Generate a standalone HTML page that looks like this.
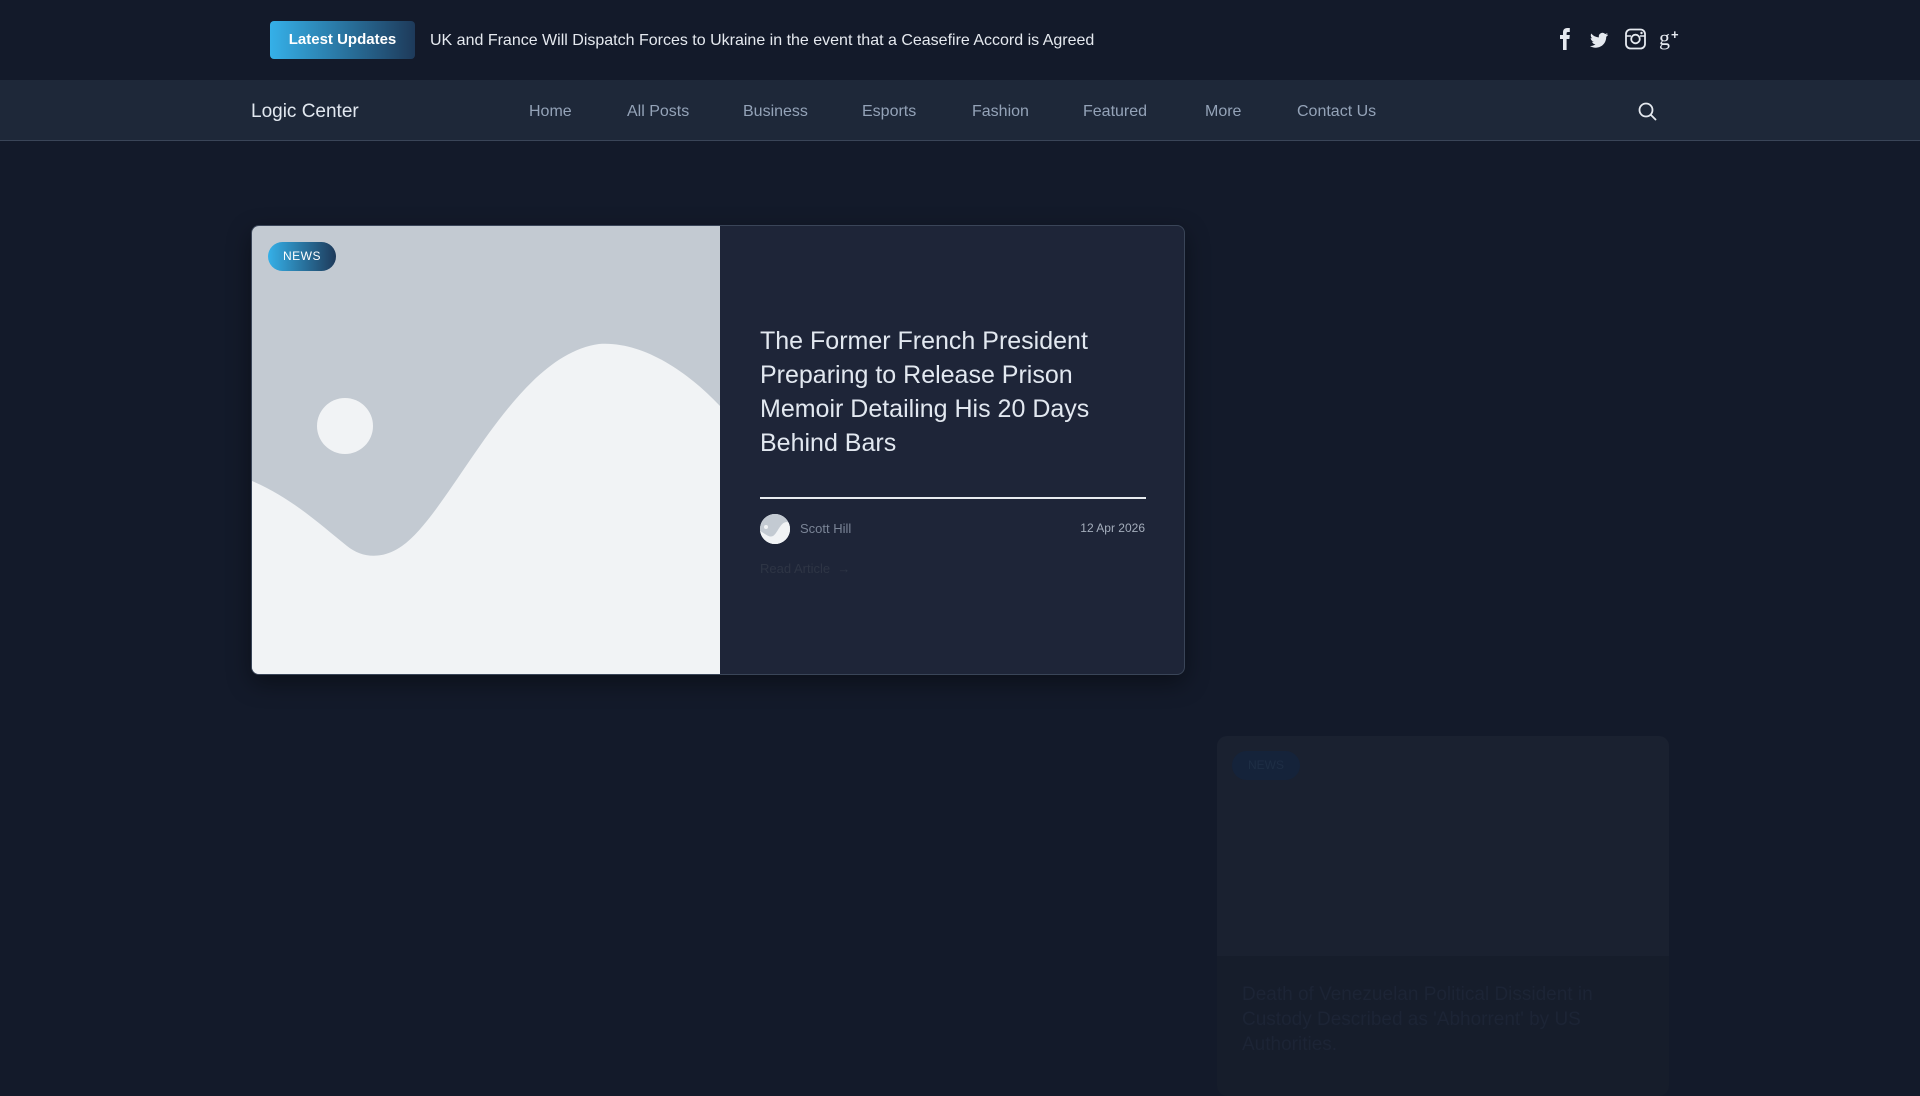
<!DOCTYPE html>
<html><head><meta charset="utf-8"><style>
*{margin:0;padding:0;box-sizing:border-box}
body{width:1920px;height:1080px;overflow:hidden;background:#131a2a;font-family:"Liberation Sans",sans-serif;position:relative}
.top{position:absolute;left:0;top:0;width:1920px;height:80px;background:#131a2a}
.btn{position:absolute;left:270px;top:21px;width:145px;height:38px;border-radius:4px;background:linear-gradient(90deg,#35b0e8,#1e3a5a);color:#fff;font-weight:bold;font-size:15px;line-height:38px;text-align:center}
.tick{position:absolute;left:430px;top:32px;color:#e5e9ef;font-size:16px}
.nav{position:absolute;left:0;top:80px;width:1920px;height:61px;background:#1e2839;border-bottom:1px solid #3a4558}
.logo{position:absolute;left:251px;top:21px;color:#e2e8f0;font-size:19px}
.nav a{position:absolute;top:23px;color:#94a3b8;font-size:16px;text-decoration:none}
.card{position:absolute;left:251px;top:225px;width:934px;height:450px;border-radius:8px;background:#1e2538;border:1px solid #3a4558;overflow:hidden;box-shadow:0 8px 24px rgba(0,0,0,.4)}
.img{position:absolute;left:0;top:0;width:468px;height:450px}
.badge{position:absolute;left:16px;top:16px;width:68px;height:29px;border-radius:15px;background:linear-gradient(90deg,#35b0e8,#1e3a5a);color:#fff;font-size:12px;line-height:29px;text-align:center;letter-spacing:.5px}
.title{position:absolute;left:508px;top:98px;width:390px;color:#e2e8f0;font-size:25px;line-height:34px}
.hr{position:absolute;left:508px;top:271px;width:386px;height:2px;background:#e8ecf0}
.av{position:absolute;left:508px;top:288px;width:30px;height:30px;border-radius:50%;background:#f1f3f5;overflow:hidden}
.auth{position:absolute;left:548px;top:295px;color:#7a8496;font-size:13px}
.date{position:absolute;right:39px;top:295px;color:#a4adbb;font-size:12px}
.read{position:absolute;left:508px;top:335px;color:#2e3545;font-size:13px}
.c2{position:absolute;left:1217px;top:736px;width:452px;height:360px;border-radius:10px;background:#161d2b;overflow:hidden}
.c2 .im{position:absolute;left:0;top:0;width:452px;height:220px;background:#1a2130}
.c2 .t{position:absolute;left:25px;top:246px;width:400px;color:#1c2435;font-size:19px;line-height:25px}
</style></head><body>
<div class="top">
<div class="btn">Latest Updates</div>
<div class="tick">UK and France Will Dispatch Forces to Ukraine in the event that a Ceasefire Accord is Agreed</div>
<svg style="position:absolute;left:1554px;top:26px" width="135" height="26" viewBox="0 0 135 26">
<path d="M9 24V13H6V9h3V6.5C9 3.8 10.3 2 13.3 2h2.5v4H14c-1.2 0-1.4.5-1.4 1.5V9h3.2l-.4 4h-2.8v11z" fill="#e5e9ef"/>
<path d="M54 8.5c-.7.3-1.4.5-2.1.6.8-.5 1.3-1.2 1.6-2-.7.4-1.5.7-2.3.9a3.7 3.7 0 0 0-6.3 3.4c-3.1-.2-5.8-1.600-7.600-3.900-1 1.700-.5 3.800 1.100 4.900-.6 0-1.200-.2-1.700-.5 0 1.800 1.300 3.300 3 3.700-.5.2-1.100.2-1.700.1.5 1.500 1.900 2.500 3.500 2.600A7.5 7.5 0 0 1 36 20c1.700 1.100 3.600 1.700 5.700 1.700 6.900 0 10.700-5.700 10.500-10.900.7-.5 1.300-1.100 1.800-1.800z" fill="#e5e9ef"/>
<rect x="72" y="3.5" width="19" height="19" rx="4.5" fill="none" stroke="#e5e9ef" stroke-width="1.8"/><circle cx="81.5" cy="13" r="4.3" fill="none" stroke="#e5e9ef" stroke-width="1.8"/><line x1="72" y1="10" x2="77" y2="10" stroke="#e5e9ef" stroke-width="1.5"/><line x1="86" y1="10" x2="91" y2="10" stroke="#e5e9ef" stroke-width="1.5"/><circle cx="87.5" cy="7" r="1.2" fill="#e5e9ef"/>
<text x="105" y="19" font-family="Liberation Serif" font-size="22" fill="#e5e9ef">g</text><text x="117" y="13" font-family="Liberation Sans" font-size="13" font-weight="bold" fill="#e5e9ef">+</text>
</svg>
</div>
<div class="nav">
<div class="logo">Logic Center</div>
<a style="left:529px">Home</a><a style="left:627px">All Posts</a><a style="left:743px">Business</a><a style="left:862px">Esports</a><a style="left:972px">Fashion</a><a style="left:1083px">Featured</a><a style="left:1205px">More</a><a style="left:1297px">Contact Us</a>
<svg style="position:absolute;left:1637px;top:21px" width="22" height="22" viewBox="0 0 22 22"><circle cx="9" cy="9" r="6.5" fill="none" stroke="#e5e9ef" stroke-width="1.8"/><line x1="14" y1="14" x2="18.5" y2="18.5" stroke="#e5e9ef" stroke-width="1.8" stroke-linecap="round"/></svg>
</div>
<div class="card">
<svg class="img" viewBox="0 0 468 450"><rect width="468" height="450" fill="#c3cad2"/><circle cx="93" cy="200" r="28" fill="#f1f3f5"/><path d="M0 255C40 272 70 300 95 320C110 332 130 334 150 320C200 285 260 130 347 118C390 115 435 145 468 180V450H0Z" fill="#f1f3f5"/></svg>
<div class="badge">NEWS</div>
<div class="title">The Former French President Preparing to Release Prison Memoir Detailing His 20 Days Behind Bars</div>
<div class="hr"></div>
<div class="av"><svg width="30" height="30" viewBox="0 0 30 30"><rect width="30" height="30" fill="#c3cad2"/><path d="M0 17C6 20 9 24 13 22C18 19 20 8 27 8L30 9V30H0Z" fill="#f1f3f5"/><circle cx="6" cy="13" r="2" fill="#f1f3f5"/></svg></div>
<div class="auth">Scott Hill</div>
<div class="date">12 Apr 2026</div>
<div class="read">Read Article &nbsp;→</div>
</div>
<div class="c2"><div class="im"></div><div style="position:absolute;left:15px;top:15px;width:68px;height:29px;border-radius:15px;background:#15233a;color:#1e2e45;font-size:12px;line-height:29px;text-align:center">NEWS</div><div class="t">Death of Venezuelan Political Dissident in Custody Described as 'Abhorrent' by US Authorities.</div></div>
</body></html>
